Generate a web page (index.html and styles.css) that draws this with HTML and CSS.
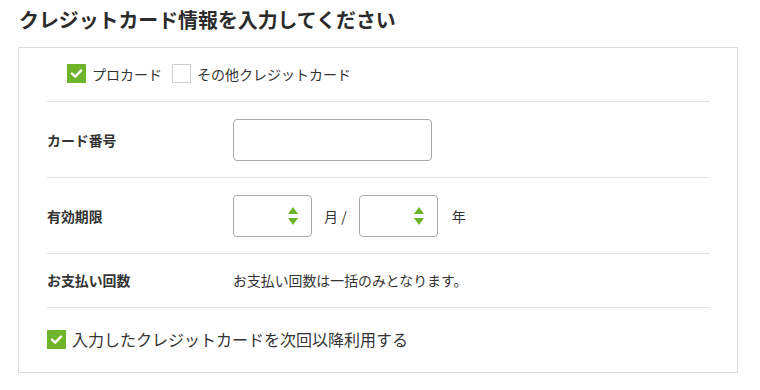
FILE: index.html
```html
<!DOCTYPE html>
<html lang="ja">
<head>
<meta charset="utf-8">
<link rel="stylesheet" href="styles.css">
</head>
<body>
<h1 class="title">クレジットカード情報を入力してください</h1>
<div class="box">
  <div class="card-types">
    <label class="opt">
      <span class="check on"><svg viewBox="0 0 19 19" width="19" height="19"><path d="M5 9.6 L8.2 12.6 L14 6.6" fill="none" stroke="#fff" stroke-width="2.4" stroke-linecap="round" stroke-linejoin="round"/></svg></span>
      <span>プロカード</span>
    </label>
    <label class="opt">
      <span class="check off"></span>
      <span>その他クレジットカード</span>
    </label>
  </div>
  <div class="row tall">
    <div class="label">カード番号</div>
    <div class="field"><span class="input"></span></div>
  </div>
  <div class="row tall">
    <div class="label">有効期限</div>
    <div class="field">
      <span class="select"><span class="arrows"><span class="up"></span><span class="down"></span></span></span>
      <span class="unit">月 /</span>
      <span class="select"><span class="arrows"><span class="up"></span><span class="down"></span></span></span>
      <span class="unit last">年</span>
    </div>
  </div>
  <div class="row short">
    <div class="label">お支払い回数</div>
    <div class="field text">お支払い回数は一括のみとなります。</div>
  </div>
  <div class="remember">
    <span class="check on"><svg viewBox="0 0 19 19" width="19" height="19"><path d="M5 9.6 L8.2 12.6 L14 6.6" fill="none" stroke="#fff" stroke-width="2.4" stroke-linecap="round" stroke-linejoin="round"/></svg></span>
    <span>入力したクレジットカードを次回以降利用する</span>
  </div>
</div>
</body>
</html>
```

FILE: styles.css
```css
* { box-sizing: border-box; }
body {
  margin: 0;
  background: #fff;
  font-family: "Noto Sans CJK JP", "Noto Sans", sans-serif;
  color: #333;
}
.title {
  margin: 0;
  padding: 6px 0 0 19px;
  height: 47px;
  font-size: 19.9px;
  font-weight: 700;
  line-height: 28px;
  color: #2b2b2b;
}
.box {
  margin-left: 18px;
  width: 720px;
  height: 326px;
  border: 1px solid #dcdcdc;
  padding: 0 27px 0 28px;
}
.card-types {
  display: flex;
  align-items: center;
  gap: 10px;
  height: 54px;
  padding: 0 0 2px 20px;
  border-bottom: 1px solid #e2e2e2;
  font-size: 14px;
}
.opt {
  display: flex;
  align-items: center;
  gap: 6px;
}
.check {
  display: inline-flex;
  width: 19px;
  height: 19px;
  flex: none;
}
.check.on { background: #6fb52c; }
.check.off { border: 1px solid #cfcfcf; background: #fff; }
.row {
  display: flex;
  align-items: center;
  border-bottom: 1px solid #e2e2e2;
}
.row.tall { height: 76px; }
.row.short { height: 54px; padding-bottom: 1px; }
.label {
  width: 186px;
  flex: none;
  font-size: 13.9px;
  font-weight: 700;
  color: #333;
}
.field {
  display: flex;
  align-items: center;
}
.field.text { font-size: 13.9px; color: #333; }
.input {
  display: block;
  width: 199px;
  height: 42px;
  border: 1px solid #a9a9a9;
  border-radius: 4px;
  background: #fff;
}
.select {
  display: flex;
  align-items: center;
  justify-content: flex-end;
  width: 79px;
  height: 42px;
  border: 1px solid #a9a9a9;
  border-radius: 4px;
  padding-right: 13px;
}
.arrows {
  display: flex;
  flex-direction: column;
  gap: 4px;
}
.up, .down {
  width: 0;
  height: 0;
  border-left: 5px solid transparent;
  border-right: 5px solid transparent;
}
.up { border-bottom: 7px solid #6fb52c; }
.down { border-top: 7px solid #6fb52c; }
.unit {
  font-size: 14px;
  margin: 0 12px;
}
.unit.last { margin: 0 14px; }
.remember {
  display: flex;
  align-items: center;
  gap: 6px;
  padding-top: 19px;
  font-size: 16px;
  color: #333;
}
```
